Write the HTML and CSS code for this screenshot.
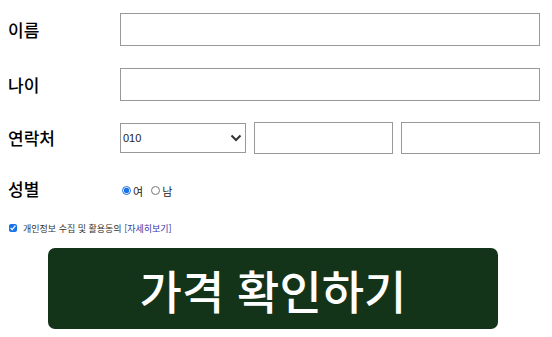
FILE: index.html
```html
<!DOCTYPE html>
<html lang="ko">
<head>
<meta charset="utf-8">
<link rel="stylesheet" href="styles.css">
</head>
<body>
<form class="form">
  <div class="row row-name">
    <label class="label">이름</label>
    <input class="field field-wide" type="text">
  </div>
  <div class="row row-age">
    <label class="label">나이</label>
    <input class="field field-wide" type="text">
  </div>
  <div class="row row-phone">
    <label class="label">연락처</label>
    <span class="select-wrap">
      <select class="select"><option>010</option></select>
      <svg class="chevron" width="12" height="8" viewBox="0 0 12 8"><path d="M1.5 1.5 L6 6 L10.5 1.5" fill="none" stroke="#333" stroke-width="2"/></svg>
    </span>
    <input class="field field-phone" type="text">
    <input class="field field-phone" type="text">
  </div>
  <div class="row row-gender">
    <label class="label">성별</label>
    <span class="radios">
      <input class="radio" type="radio" name="g" checked><span class="radio-text">여</span>
      <input class="radio" type="radio" name="g"><span class="radio-text">남</span>
    </span>
  </div>
  <div class="agree">
    <input class="check" type="checkbox" checked>
    <span class="agree-text">개인정보 수집 및 활용동의 <a class="more">[자세히보기]</a></span>
  </div>
  <button class="submit" type="button">가격 확인하기</button>
</form>
</body>
</html>
```

FILE: styles.css
```css
html, body {
  margin: 0;
  padding: 0;
  background: #fff;
}
body {
  font-family: "Noto Sans CJK KR", "Noto Sans", sans-serif;
  color: #111;
}
.form {
  padding: 13px 12px 0 8px;
  display: flex;
  flex-direction: column;
}
.row {
  display: flex;
  align-items: center;
}
.label {
  width: 112px;
  font-size: 17px;
  font-weight: 500;
  line-height: 20px;
  color: #000;
}
.field {
  box-sizing: border-box;
  border: 1px solid #999;
  height: 33px;
  margin: 0;
  padding: 0 4px;
  background: #fff;
}
.field-wide {
  width: 421px;
}
.row-age {
  margin-top: 22px;
}
.row-phone {
  margin-top: 21px;
  height: 32px;
}
.row-phone .field {
  height: 32px;
}
.select-wrap {
  position: relative;
  display: inline-block;
  width: 126px;
  height: 30px;
}
.select {
  appearance: none;
  -webkit-appearance: none;
  box-sizing: border-box;
  width: 126px;
  height: 30px;
  border: 1px solid #999;
  border-radius: 0;
  background: #fff;
  margin: 0;
  padding: 0 2px;
  font-family: "Liberation Sans", Arial, sans-serif;
  font-size: 11px;
  color: #222;
}
.chevron {
  position: absolute;
  right: 4px;
  top: 11px;
}
.field-phone {
  width: 139px;
  margin-left: 8px;
}
.row-gender {
  margin-top: 22px;
  height: 26px;
}
.radios {
  display: flex;
  align-items: center;
  margin-top: 3px;
}
.radio {
  width: 9px;
  height: 9px;
  margin: 0 2px 0 2px;
  accent-color: #1a73e8;
}
.radio-text {
  font-size: 11px;
  margin-right: 6px;
  color: #222;
}
.agree {
  display: flex;
  align-items: center;
  margin-top: 20px;
  height: 12px;
}
.check {
  width: 8px;
  height: 8px;
  margin: 0 6px 0 1px;
  accent-color: #1a73e8;
}
.agree-text {
  font-size: 9px;
  color: #333;
}
.more {
  color: #3535a8;
}
.submit {
  margin: 14px 0 0 40px;
  width: 450px;
  height: 81px;
  border: none;
  border-radius: 7px;
  background: #143419;
  color: #fff;
  font-family: "Noto Sans CJK KR", sans-serif;
  font-size: 46px;
  font-weight: 500;
  padding: 0;
  line-height: 1;
}
```
